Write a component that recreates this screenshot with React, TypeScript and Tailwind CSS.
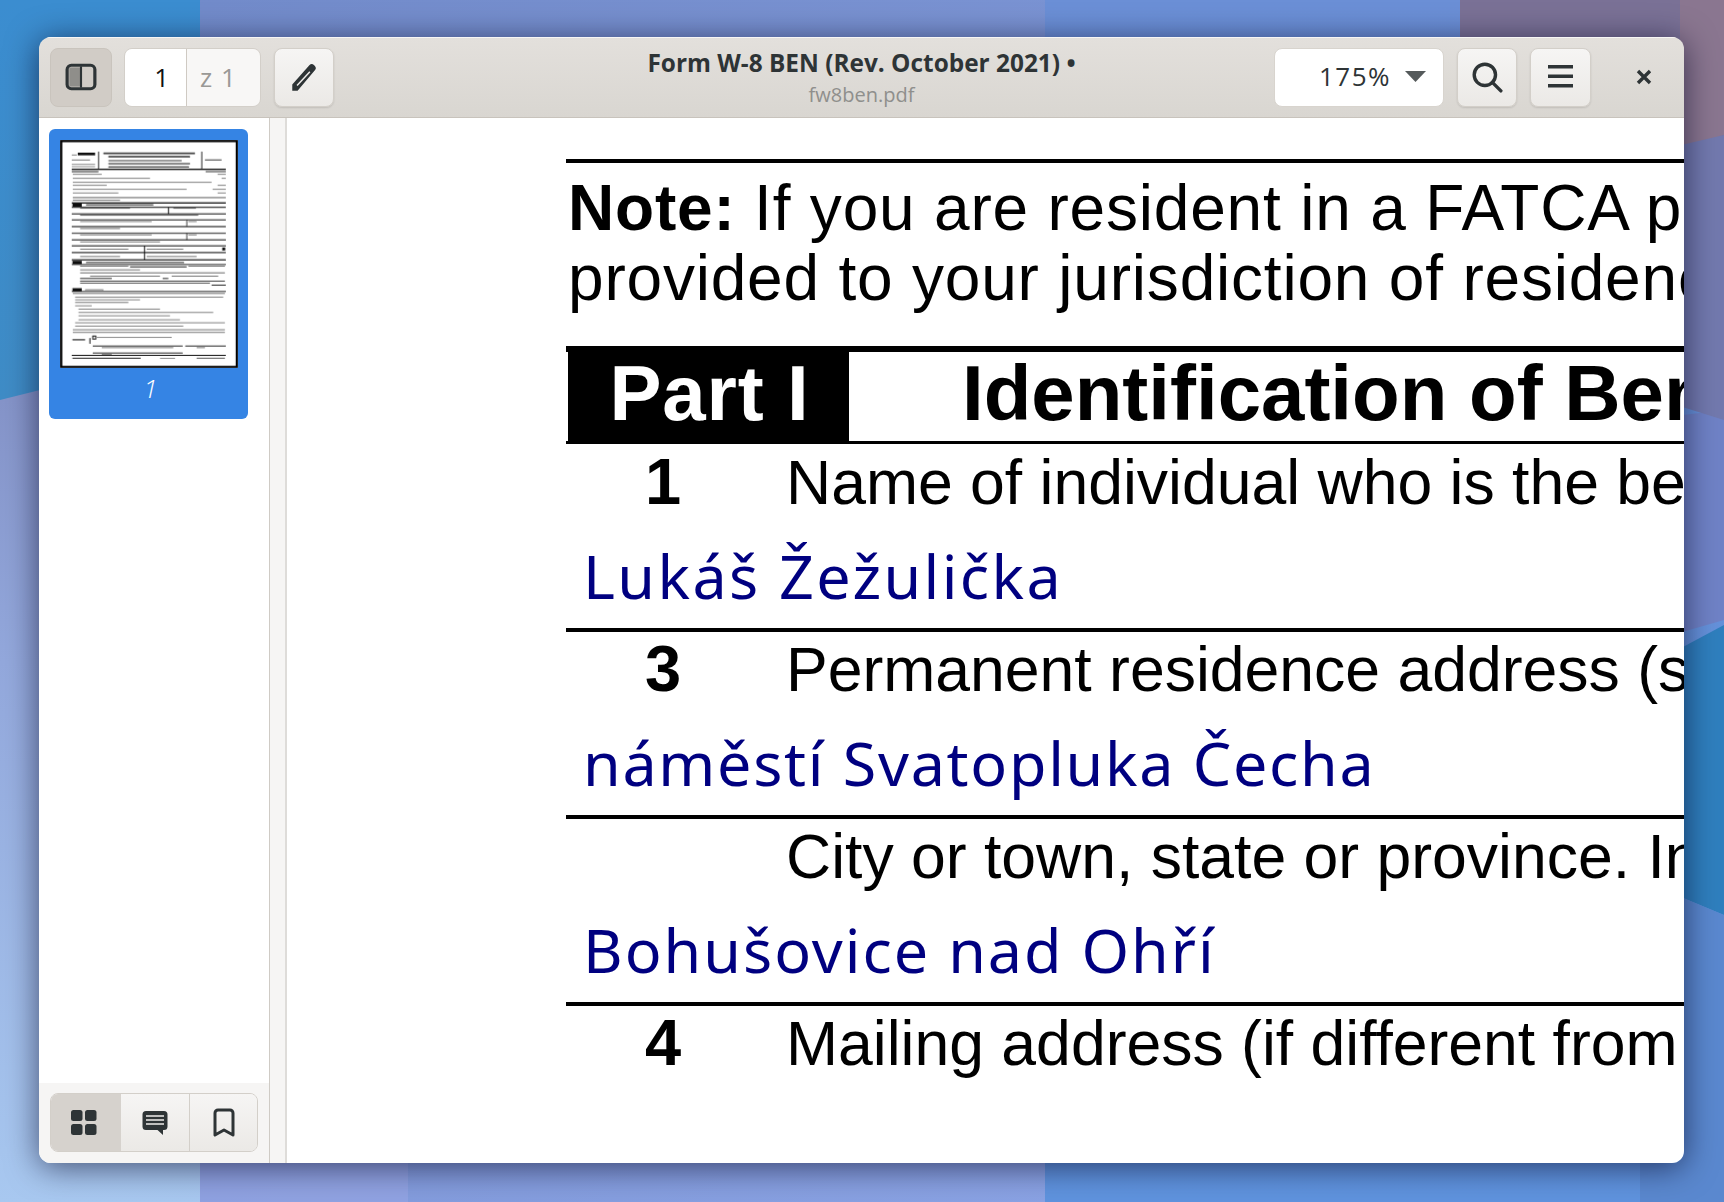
import React from 'react';

const uiFont = "font-['Open_Sans','Noto_Sans',sans-serif]";

// thumbnail strokes, in thumbnail pixels x3: [x1, y, x2, thickness, opacity]
const thumbLines: number[][] = [
  [113, 102, 165, 8, 1], [190, 100, 465, 5, 0.8], [205, 110, 450, 5, 0.8], [205, 122, 425, 4, 0.6], [205, 131, 450, 4, 0.75], [205, 141, 447, 4, 0.75],
  [95, 105, 110, 3, 0.5], [95, 120, 150, 3, 0.55], [95, 133, 165, 3, 0.45], [95, 140, 165, 3, 0.45], [495, 120, 545, 4, 0.6],
  [95, 148, 558, 4, 1], [95, 155, 175, 4, 0.7], [497, 155, 558, 4, 0.6], [98, 163, 185, 3, 0.5], [533, 163, 558, 3, 0.5],
  [98, 175, 330, 3, 0.5], [545, 175, 558, 3, 0.5], [98, 187, 515, 3, 0.5], [98, 196, 200, 3, 0.5], [533, 196, 558, 3, 0.5],
  [98, 208, 440, 3, 0.5], [518, 208, 558, 3, 0.5], [98, 219, 235, 3, 0.5], [533, 219, 558, 3, 0.5],
  [98, 233, 558, 3, 0.65], [98, 241, 240, 3, 0.55], [95, 249, 558, 4, 1], [97, 255, 125, 11, 1], [138, 255, 340, 4, 0.7], [95, 262, 558, 4, 0.8],
  [120, 265, 270, 3, 0.55], [400, 265, 468, 3, 0.55], [95, 282, 558, 4, 0.8], [120, 286, 475, 3, 0.6], [95, 300, 558, 4, 0.7], [120, 305, 335, 3, 0.5], [445, 305, 470, 3, 0.5],
  [95, 320, 558, 4, 0.8], [120, 326, 240, 3, 0.55], [95, 340, 558, 4, 0.7], [120, 345, 335, 3, 0.5], [445, 345, 470, 3, 0.5], [95, 360, 558, 4, 0.8], [120, 366, 360, 3, 0.55],
  [95, 378, 558, 4, 0.8], [120, 388, 265, 3, 0.55], [320, 388, 430, 3, 0.55], [95, 398, 558, 4, 0.8], [120, 410, 240, 3, 0.55], [320, 410, 470, 3, 0.55],
  [95, 420, 558, 4, 0.9], [97, 428, 125, 10, 1], [138, 428, 432, 4, 0.7], [95, 434, 558, 3, 0.9],
  [120, 439, 265, 3, 0.55], [270, 441, 440, 3, 0.9], [445, 439, 555, 3, 0.55], [120, 450, 300, 3, 0.55], [120, 459, 555, 3, 0.6], [150, 469, 360, 3, 0.55], [395, 469, 535, 3, 0.55],
  [120, 476, 215, 3, 0.9], [368, 476, 385, 3, 0.9], [120, 490, 510, 3, 0.65], [120, 484, 555, 3, 0.8], [515, 496, 558, 3, 0.9],
  [97, 510, 125, 10, 1], [135, 510, 190, 3, 0.6], [95, 515, 558, 3, 0.9], [98, 521, 555, 3, 0.55], [105, 532, 550, 3, 0.5], [105, 540, 300, 3, 0.5], [105, 548, 265, 3, 0.55], [105, 558, 155, 3, 0.5],
  [115, 568, 360, 3, 0.5], [115, 578, 520, 3, 0.5], [115, 588, 390, 3, 0.5], [115, 600, 420, 3, 0.5], [105, 609, 555, 3, 0.5], [105, 619, 430, 3, 0.5], [98, 630, 555, 3, 0.55], [98, 638, 555, 3, 0.55],
  [97, 660, 135, 4, 0.8], [170, 653, 395, 3, 0.5], [158, 679, 428, 3, 0.9], [436, 679, 558, 3, 0.9], [185, 684, 400, 3, 0.5], [470, 684, 495, 3, 0.5], [158, 700, 428, 3, 0.9], [185, 704, 215, 3, 0.5],
  [95, 707, 558, 3, 1], [97, 716, 302, 4, 0.8], [360, 716, 405, 3, 0.5], [470, 716, 555, 4, 0.6],
];

const Wallpaper = () => (
  <svg className="absolute inset-0" width="1724" height="1202" viewBox="0 0 1724 1202">
    <defs>
      <linearGradient id="leftBlue" x1="0" y1="0" x2="0" y2="1">
        <stop offset="0" stopColor="#3b8dd0" />
        <stop offset="1" stopColor="#3f8cc6" />
      </linearGradient>
      <linearGradient id="leftPale" x1="0" y1="0" x2="0" y2="1">
        <stop offset="0.3" stopColor="#8391c6" />
        <stop offset="0.55" stopColor="#93a8dc" />
        <stop offset="1" stopColor="#a8c8f0" />
      </linearGradient>
      <linearGradient id="mid" x1="0" y1="0" x2="1" y2="1">
        <stop offset="0" stopColor="#7089c8" />
        <stop offset="1" stopColor="#90a8ea" />
      </linearGradient>
      <linearGradient id="right" x1="0" y1="0" x2="0" y2="1">
        <stop offset="0" stopColor="#6b8fd6" />
        <stop offset="1" stopColor="#5f93de" />
      </linearGradient>
    </defs>
    <rect width="1724" height="1202" fill="url(#mid)" />
    <rect x="1045" width="679" height="1202" fill="url(#right)" />
    <polygon points="0,0 200,0 200,1202 0,1202" fill="url(#leftPale)" />
    <polygon points="0,400 200,350 200,0 0,0" fill="url(#leftBlue)" />
    <polygon points="200,1202 408,1202 408,700 200,700" fill="#9ba7e6" opacity="0.55" />
    <polygon points="1460,0 1724,0 1724,150 1460,220" fill="#7a7196" />
    <polygon points="1680,0 1724,0 1724,135 1680,148" fill="#8a7690" />
    <polygon points="1480,440 1724,410 1724,620 1480,690" fill="#6f82c6" />
    <polygon points="1660,150 1724,135 1724,420 1660,400" fill="#7279ae" />
    <polygon points="1640,670 1724,625 1724,915 1640,880" fill="#2f7fbe" />
    <polygon points="1640,880 1724,915 1724,1202 1640,1202" fill="#5a88cf" />
  </svg>
);

const SidebarIcon = () => (
  <svg width="32" height="32" viewBox="0 0 30 30">
    <rect x="4" y="6" width="11" height="18" fill="#8f8e8a" />
    <rect x="2" y="4" width="26" height="22" rx="4" fill="none" stroke="#2e3436" strokeWidth="3" />
    <rect x="14" y="5" width="2" height="20" fill="#2e3436" />
  </svg>
);

const PencilIcon = () => (
  <svg width="30" height="32" viewBox="0 0 28 30">
    <path d="M3 28v-6L19 4a3.2 3.2 0 0 1 4.5 0l.5.5a3.2 3.2 0 0 1 0 4.5L8 28z" fill="#2e3436" />
    <path d="M7 22.5 19 9.5l1 1L8 23.5z" fill="#efedeb" />
  </svg>
);

const SearchIcon = () => (
  <svg width="32" height="32" viewBox="0 0 30 30" fill="none" stroke="#2e3436" strokeWidth="3.200">
    <circle cx="13" cy="13" r="10" />
    <path d="m20 20 8 8" strokeLinecap="round" />
  </svg>
);

const MenuIcon = () => (
  <svg width="26" height="24" viewBox="0 0 26 24" fill="#2e3436">
    <rect y="0" width="25" height="3.500" />
    <rect y="9.500" width="25" height="3.500" />
    <rect y="19" width="25" height="3.500" />
  </svg>
);

const CloseIcon = () => (
  <svg width="16" height="16" viewBox="0 0 16 16" fill="none" stroke="#2e3436" strokeWidth="3.400">
    <path d="m2 2 12 12M14 2 2 14" />
  </svg>
);

const GridIcon = () => (
  <svg width="26" height="26" viewBox="0 0 26 26" fill="#2e3436">
    <rect width="11.500" height="11" rx="2.500" />
    <rect x="14" width="11.500" height="11" rx="2.500" />
    <rect y="14" width="11.500" height="11" rx="2.500" />
    <rect x="14" y="14" width="11.500" height="11" rx="2.500" />
  </svg>
);

const CommentIcon = () => (
  <svg width="26" height="26" viewBox="0 0 26 26">
    <path d="M4 1h18a3.500 3.500 0 0 1 3.500 3.500v12A3.500 3.500 0 0 1 22 20h-1v5l-5.500-5H4A3.500 3.500 0 0 1 .5 16.500v-12A3.500 3.500 0 0 1 4 1z" fill="#2e3436" />
    <path d="M4 6h18M4 10h18M4 14h18" stroke="#efedeb" strokeWidth="1.500" />
  </svg>
);

const BookmarkIcon = () => (
  <svg width="24" height="30" viewBox="0 0 24 30" fill="none" stroke="#2e3436" strokeWidth="3">
    <path d="M3 27V5a3 3 0 0 1 3-3h12a3 3 0 0 1 3 3v22l-9-5z" strokeLinejoin="round" />
  </svg>
);

const toolButton = 'flex h-[59px] items-center justify-center rounded-[8px] border border-[#d3cfc9] bg-gradient-to-b from-[#f6f5f4] to-[#ebe9e6] shadow-[0_1px_2px_rgba(0,0,0,0.12)]';

const Header = () => (
  <header className="grid h-[81px] shrink-0 grid-cols-[1fr_auto_1fr] items-center border-b border-[#c8c3bc] bg-gradient-to-b from-[#e3e0dc] to-[#d9d6d1] shadow-[inset_0_1px_0_#f7f6f5]">
    <div className="flex items-center pl-[11px]">
      <div className="flex h-[59px] w-[62px] items-center justify-center rounded-[8px] border border-[#c9c4bd] bg-[#d1ccc6]">
        <SidebarIcon />
      </div>
      <div className="ml-[12px] flex h-[59px] w-[137px] overflow-hidden rounded-[8px] border border-[#d3cfc9] text-[26px]">
        <div className="flex w-[61px] items-center justify-end bg-white pr-[17px] text-[#111]">1</div>
        <div className="flex flex-1 items-center border-l border-[#cfcac3] bg-[#f8f7f6] pl-[13px] tracking-[1px] text-[#9a9996]">z 1</div>
      </div>
      <div className={`${toolButton} ml-[13px] w-[60px]`}>
        <PencilIcon />
      </div>
    </div>
    <div className="flex flex-col items-center pt-[2px]">
      <div className="text-[24.4px] font-bold leading-[32px] text-[#2e3436]">Form W-8 BEN (Rev. October 2021) •</div>
      <div className="mt-[2px] text-[20px] leading-[28px] text-[#8f8f8c]">fw8ben.pdf</div>
    </div>
    <div className="flex items-center justify-end pr-[10px]">
      <div className="flex h-[59px] w-[170px] items-center justify-end rounded-[8px] border border-[#d8d4ce] bg-white pb-[2px] pr-[17px] text-[26px] tracking-[1.500px] text-[#2e3436]">
        175%
        <svg className="ml-[14px]" width="21" height="11" viewBox="0 0 21 11">
          <path d="M0 0h21L10.500 11z" fill="#555a5b" />
        </svg>
      </div>
      <div className={`${toolButton} ml-[13px] w-[60px]`}>
        <SearchIcon />
      </div>
      <div className={`${toolButton} ml-[13px] w-[61px]`}>
        <MenuIcon />
      </div>
      <div className="ml-[23px] flex h-[59px] w-[60px] items-center justify-center">
        <CloseIcon />
      </div>
    </div>
  </header>
);

const Thumbnail = () => (
  <svg className="block" width="178" height="228" viewBox="60 60 534 685">
    <defs>
      <filter id="soft" x="0" y="0" width="1" height="1">
        <feGaussianBlur stdDeviation="1.500" />
      </filter>
    </defs>
    <rect x="60" y="60" width="534" height="685" fill="#fff" />
    <g filter="url(#soft)" fill="#111">
      {thumbLines.map((l, i) => (
        <rect key={i} x={l[0]} y={l[1] - l[3] / 2} width={l[2] - l[0]} height={l[3]} opacity={l[4]} />
      ))}
      <rect x="174" y="95" width="3" height="53" opacity="0.9" />
      <rect x="484" y="95" width="3" height="53" opacity="0.9" />
      <rect x="384" y="262" width="3" height="20" />
      <rect x="439" y="300" width="3" height="20" opacity="0.8" />
      <rect x="439" y="340" width="3" height="20" opacity="0.8" />
      <rect x="312" y="378" width="3" height="42" />
      <rect x="547" y="383" width="9" height="9" />
      <rect x="148" y="655" width="3" height="17" />
      <rect x="158" y="649" width="9" height="9" fill="none" stroke="#111" strokeWidth="3" />
    </g>
    <rect x="63" y="63" width="528" height="679" fill="none" stroke="#000" strokeWidth="7" />
  </svg>
);

const Sidebar = () => (
  <aside className="flex w-[231px] shrink-0 flex-col border-r border-[#cfcbc5] bg-white">
    <div className="flex-1 pl-[10px] pt-[11px]">
      <div className="flex h-[290px] w-[199px] flex-col rounded-[6px] bg-[#3584e4] px-[11px] pt-[11px]">
        <Thumbnail />
        <div className="mt-[5px] pl-[4px] text-center text-[26px] font-light italic leading-[30px] text-white">1</div>
      </div>
    </div>
    <div className="h-[80px] shrink-0 bg-[#f6f5f4] pl-[11px] pt-[10px]">
      <div className="flex h-[59px] w-[208px] overflow-hidden rounded-[8px] border border-[#d3cfc9]">
        <div className="flex w-[70px] items-center justify-center bg-[#d6d2cd] pr-[4px]"><GridIcon /></div>
        <div className="flex w-[69px] items-center justify-center border-r border-[#d3cfc9] bg-gradient-to-b from-[#f6f5f4] to-[#ebe9e6]"><CommentIcon /></div>
        <div className="flex flex-1 items-center justify-center bg-gradient-to-b from-[#f6f5f4] to-[#ebe9e6]"><BookmarkIcon /></div>
      </div>
    </div>
  </aside>
);

const Rule = () => <div className="h-[4px] w-[1200px] bg-black" />;

const Label = ({ num, text, top }: { num?: string; text: string; top: string }) => (
  <div className={`flex h-[70px] items-center text-[62.5px] leading-[70px] ${top}`}>
    <div className="w-[194px] shrink-0 text-center text-[65px] font-bold">{num}</div>
    <div className="ml-[26px] whitespace-nowrap">{text}</div>
  </div>
);

const Filled = ({ text, spacing }: { text: string; spacing: string }) => (
  <div className={`mb-[12px] ml-[17px] mt-[19px] h-[80px] whitespace-nowrap font-['Noto_Sans',sans-serif] text-[61px] leading-[80px] text-[#000080] ${spacing}`}>
    {text}
  </div>
);

const PdfPage = () => (
  <main className="min-w-0 flex-1 overflow-hidden bg-white pl-[279px] pt-[41px] font-['Liberation_Sans',Arial,sans-serif] text-black">
    <Rule />
    <div className="mt-[10px] whitespace-nowrap pl-[2px] text-[64px] leading-[70px] tracking-[0.8px]">
      <div><b>Note:</b> If you are resident in a FATCA partner jurisdiction (that is, a Model 1 IGA jurisdiction with reciprocity)</div>
      <div>provided to your jurisdiction of residence.</div>
    </div>
    <div className="mt-[33px] flex h-[98px] w-[1200px] border-b-[3px] border-t-[6px] border-black">
      <div className="ml-[2px] flex w-[281px] shrink-0 items-center justify-center bg-black pb-[6px] pl-[2px] text-[78px] font-bold tracking-[0.8px] text-white">Part I</div>
      <div className="ml-[113px] flex items-center whitespace-nowrap pb-[6px] text-[78px] font-bold">Identification of Beneficial Owner</div>
    </div>
    <Label num="1" text="Name of individual who is the beneficial owner" top="mt-[3px]" />
    <Filled text="Lukáš Žežulička" spacing="tracking-[2.4px]" />
    <Rule />
    <Label num="3" text="Permanent residence address (street, apt. or suite no., or rural route)." top="mt-[2px]" />
    <Filled text="náměstí Svatopluka Čecha" spacing="tracking-[1.7px]" />
    <Rule />
    <Label text="City or town, state or province. Include postal code where appropriate." top="mt-[2px]" />
    <Filled text="Bohušovice nad Ohří" spacing="tracking-[2px]" />
    <Rule />
    <Label num="4" text="Mailing address (if different from above)" top="mt-[2px]" />
  </main>
);

export default function App() {
  return (
    <div className="relative h-[1202px] w-[1724px] overflow-hidden">
      <Wallpaper />
      <div className="relative pl-[39px] pt-[37px]">
        <div className={`flex h-[1126px] w-[1645px] flex-col overflow-hidden rounded-[12px] shadow-[0_4px_32px_rgba(0,0,30,0.6)] ${uiFont}`}>
          <Header />
          <div className="flex min-h-0 flex-1">
            <Sidebar />
            <div className="w-[17px] shrink-0 border-r-2 border-[#dedcd9] bg-[#f6f5f4]" />
            <PdfPage />
          </div>
        </div>
      </div>
    </div>
  );
}
